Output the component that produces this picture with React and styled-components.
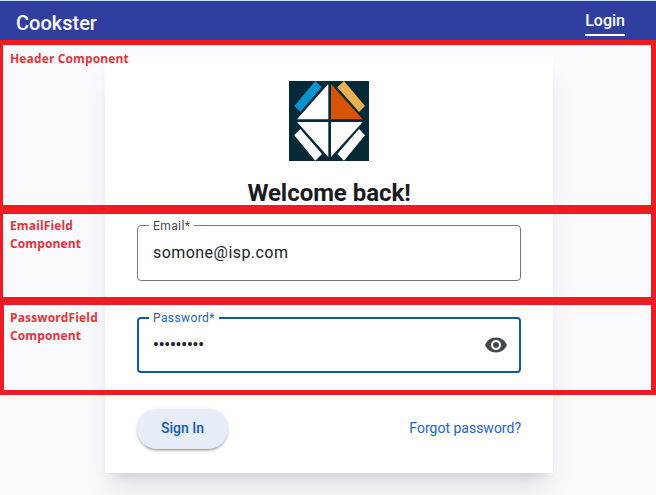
import React from 'react';
import styled, { createGlobalStyle, css } from 'styled-components';

const GlobalStyle = createGlobalStyle`
  * { box-sizing: border-box; }
  body {
    margin: 0;
    background: #faf9fd;
    color: #1a1b1f;
    font-family: Roboto, sans-serif;
    overflow: hidden;
  }
`;

const Page = styled.div`
  position: relative;
  height: 495px;
  overflow: hidden;
`;

const NavBar = styled.nav`
  display: flex;
  justify-content: space-between;
  height: 41px;
  padding: 0 31px 0 16px;
  border-top: 1px solid #cfe0f5;
  background: #303f9f;
  color: #fff;
`;

const Brand = styled.span`
  font-size: 20px;
  font-weight: 500;
  line-height: 44px;
`;

const NavLink = styled.a`
  height: 35px;
  border-bottom: 2px solid #fff;
  font-size: 16px;
  font-weight: 500;
  line-height: 39px;
`;

const Card = styled.main`
  display: flex;
  flex-direction: column;
  width: 448px;
  height: 416px;
  margin: 16px 0 0 105px;
  padding: 24px 32px;
  background: #fff;
  box-shadow: 0 20px 25px -5px rgba(0, 0, 0, 0.1), 0 8px 10px -6px rgba(0, 0, 0, 0.1);
`;

const Logo = styled.svg`
  display: block;
  align-self: center;
  width: 80px;
  height: 80px;
`;

const Title = styled.h1`
  height: 32px;
  margin: 16px 0 16px;
  font-size: 24px;
  font-weight: 700;
  line-height: 32px;
  letter-spacing: -0.05px;
  text-align: center;
  white-space: nowrap;
`;

const Field = styled.div`
  position: relative;
  display: flex;
  align-items: center;
  justify-content: space-between;
  flex: none;
  height: 56px;
  margin-bottom: 36px;
  padding: 0 12px 0 15px;
  border: 1px solid #74777f;
  border-radius: 4px;
  ${({ $focused }) => $focused && css`
    padding: 0 11px 0 14px;
    border: 2px solid #12589f;
  `}
`;

const FieldLabel = styled.label`
  position: absolute;
  top: ${({ $focused }) => ($focused ? '-9px' : '-8px')};
  left: ${({ $focused }) => ($focused ? '10px' : '11px')};
  padding: 0 4px;
  background: #fff;
  color: ${({ $focused }) => ($focused ? '#1c62b0' : '#44474e')};
  font-size: 12px;
  line-height: 16px;
  letter-spacing: 0.4px;
`;

const Value = styled.span`
  font-size: 16px;
  line-height: 24px;
  letter-spacing: 0.45px;
`;

const Dots = styled.span`
  font-size: 16px;
  font-weight: 700;
  line-height: 24px;
  letter-spacing: -0.1px;
`;

const Eye = styled.svg`
  width: 24px;
  height: 24px;
  fill: #44474e;
`;

const Actions = styled.div`
  display: flex;
  align-items: center;
  justify-content: space-between;
`;

const SignIn = styled.button`
  width: 91px;
  height: 40px;
  padding: 0 0 2px;
  border: 0;
  border-radius: 20px;
  background: #e6ecf8;
  box-shadow: 0 3px 1px -2px rgba(0, 0, 0, 0.2), 0 2px 2px rgba(0, 0, 0, 0.14), 0 1px 5px rgba(0, 0, 0, 0.12);
  color: #115bac;
  font: 500 14px/20px Roboto, sans-serif;
`;

const ForgotLink = styled.a`
  padding-bottom: 2px;
  color: #2563cf;
  font-size: 14px;
  line-height: 20px;
`;

const Frame = styled.section`
  position: absolute;
  top: ${({ $top }) => $top}px;
  left: 0;
  width: 656px;
  height: ${({ $height }) => $height}px;
  padding: ${({ $pad }) => $pad};
  border-style: solid;
  border-color: #ed1c24;
  border-width: ${({ $border }) => $border};
  pointer-events: none;
`;

const Note = styled.div`
  color: #e0343c;
  font-family: 'Open Sans', sans-serif;
  font-size: 12px;
  font-weight: 700;
  line-height: 18px;
  letter-spacing: 0.14px;
  white-space: nowrap;
`;

export default function App() {
  return (
    <Page>
      <GlobalStyle />
      <NavBar>
        <Brand>Cookster</Brand>
        <NavLink>Login</NavLink>
      </NavBar>
      <Card>
        <Logo viewBox="0 0 80 80">
          <rect width="80" height="80" fill="#052936" />
          <path fill="#0a91d0" d="M26.3 0 32.7 6.3 11.3 31 5.3 25Z" />
          <path fill="#eab054" d="M55 0 48.3 6.3 70 31 76 25Z" />
          <path fill="#d75404" d="M42 3V38.3H73.7Z" />
          <path
            fill="#fff"
            d="M39.3 3V38.3H8ZM8 41H39.3V76ZM42 41H73.7L42 76ZM11.3 48 5.3 54.3 26.3 79.7 33 73ZM70 48 76 54.3 55 79.7 48.3 73Z"
          />
        </Logo>
        <Title>Welcome back!</Title>
        <Field>
          <FieldLabel>Email*</FieldLabel>
          <Value>somone@isp.com</Value>
        </Field>
        <Field $focused>
          <FieldLabel $focused>Password*</FieldLabel>
          <Dots>•••••••••</Dots>
          <Eye viewBox="0 0 24 24">
            <path d="M12 4.5C7 4.5 2.73 7.61 1 12c1.73 4.39 6 7.5 11 7.5s9.27-3.11 11-7.5c-1.73-4.39-6-7.5-11-7.5zM12 17c-2.76 0-5-2.24-5-5s2.24-5 5-5 5 2.24 5 5-2.24 5-5 5zm0-8c-1.66 0-3 1.34-3 3s1.34 3 3 3 3-1.34 3-3-1.34-3-3-3z" />
          </Eye>
        </Field>
        <Actions>
          <SignIn>Sign In</SignIn>
          <ForgotLink>Forgot password?</ForgotLink>
        </Actions>
      </Card>
      <Frame $top={40} $height={170} $border="5px 5px 5px 3px" $pad="5px 7px">
        <Note>Header Component</Note>
      </Frame>
      <Frame $top={210} $height={91} $border="4px 5px 4px 3px" $pad="3px 7px">
        <Note>EmailField<br />Component</Note>
      </Frame>
      <Frame $top={301} $height={94} $border="4px 5px 5px 4px" $pad="4px 6px">
        <Note>PasswordField<br />Component</Note>
      </Frame>
    </Page>
  );
}
